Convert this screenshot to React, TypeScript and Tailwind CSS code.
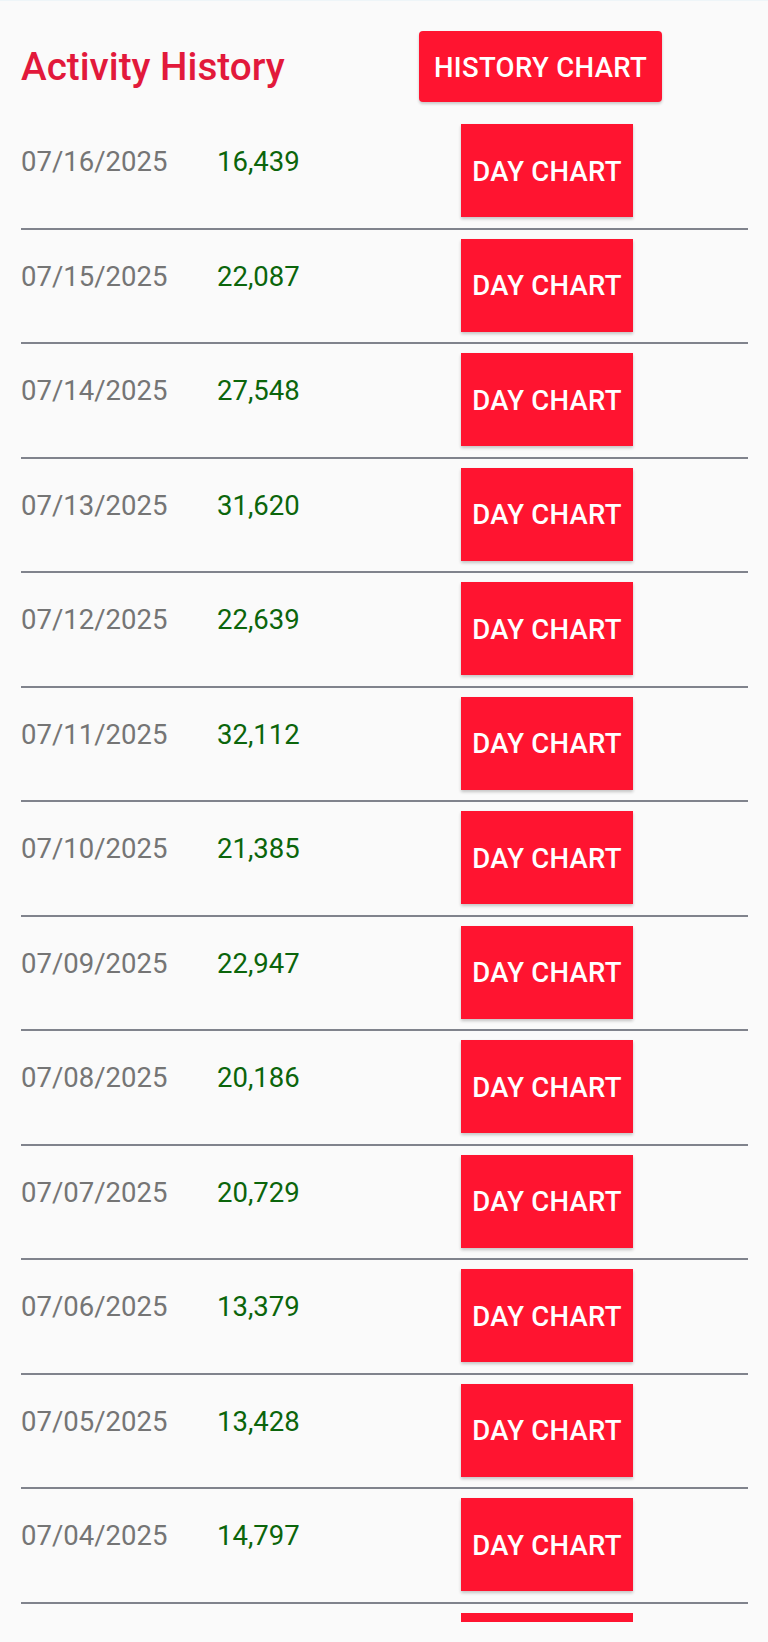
const rows: [string, string][] = [
  ['07/16/2025', '16,439'],
  ['07/15/2025', '22,087'],
  ['07/14/2025', '27,548'],
  ['07/13/2025', '31,620'],
  ['07/12/2025', '22,639'],
  ['07/11/2025', '32,112'],
  ['07/10/2025', '21,385'],
  ['07/09/2025', '22,947'],
  ['07/08/2025', '20,186'],
  ['07/07/2025', '20,729'],
  ['07/06/2025', '13,379'],
  ['07/05/2025', '13,428'],
  ['07/04/2025', '14,797'],
];

function HistoryRow({ date, steps }: { date: string; steps: string }) {
  return (
    <div>
      <div className="flex items-start pt-[9px] pb-[10.5px] pl-[21px]">
        <span className="w-[196px] mt-[22px] text-[27.5px] leading-[32px] text-[#757575]">{date}</span>
        <span className="w-[244px] mt-[22px] text-[27.5px] leading-[32px] text-[#0b650b]">{steps}</span>
        <button className="w-[172px] h-[93px] shrink-0 flex items-center justify-center pt-[2px] bg-[#ff1430] text-white text-[27.5px] tracking-[0.25px] font-medium uppercase shadow-[0_2px_3px_rgba(0,0,0,0.22)]">
          Day Chart
        </button>
      </div>
      <div className="ml-[21px] mr-[20px] h-[2px] bg-[#80838c]" />
    </div>
  );
}

export default function App() {
  return (
    <div className="h-[1642px] bg-[#fafafa] font-['Roboto',sans-serif] overflow-hidden">
      <div className="h-[1px] bg-[#eef5f8]" />
      {/* Header */}
      <div className="flex items-center pt-[30px] pb-[13px] pl-[21px]">
        <h1 className="w-[398px] text-[38.7px] font-medium text-[#e2193b] leading-[44px]">Activity History</h1>
        <button className="w-[243px] h-[71px] rounded-[4px] flex items-center justify-center pt-[2px] bg-[#ff1430] text-white text-[27.5px] tracking-[0.35px] font-medium uppercase shadow-[0_2px_3px_rgba(0,0,0,0.2)]">
          History Chart
        </button>
      </div>

      {/* List, clipped by the screen edge */}
      <div className="h-[1507px] overflow-hidden">
        {rows.map(([d, s]) => (
          <HistoryRow key={d} date={d} steps={s} />
        ))}
        <div className="pt-[9px] pl-[461px]">
          <div className="w-[172px] h-[93px] bg-[#ff1430]" />
        </div>
      </div>
    </div>
  );
}
